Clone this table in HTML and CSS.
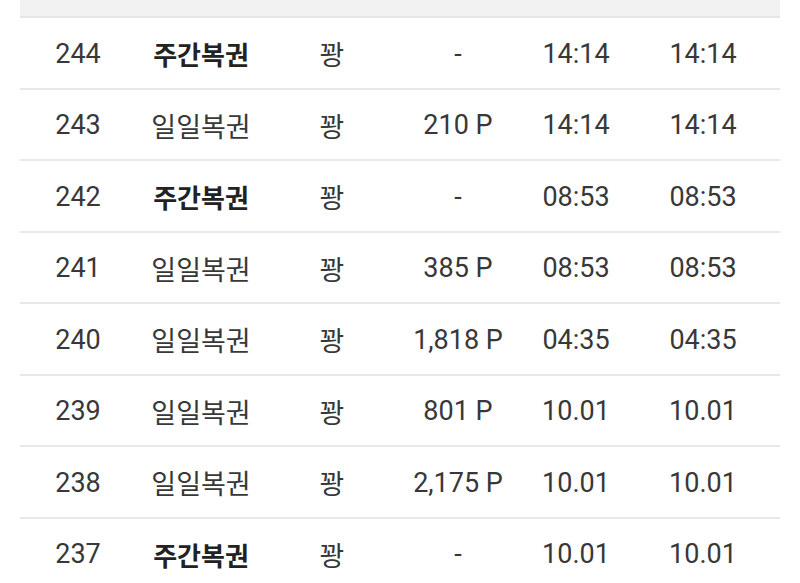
FILE: index.html
```html
<!DOCTYPE html>
<html lang="ko">
<head>
<meta charset="utf-8">
<link rel="stylesheet" href="styles.css">
</head>
<body>
<div class="board">
  <div class="head"></div>
  <div class="row"><span>244</span><span class="bold">주간복권</span><span>꽝</span><span>-</span><span>14:14</span><span>14:14</span></div>
  <div class="row"><span>243</span><span>일일복권</span><span>꽝</span><span>210 P</span><span>14:14</span><span>14:14</span></div>
  <div class="row"><span>242</span><span class="bold">주간복권</span><span>꽝</span><span>-</span><span>08:53</span><span>08:53</span></div>
  <div class="row"><span>241</span><span>일일복권</span><span>꽝</span><span>385 P</span><span>08:53</span><span>08:53</span></div>
  <div class="row"><span>240</span><span>일일복권</span><span>꽝</span><span>1,818 P</span><span>04:35</span><span>04:35</span></div>
  <div class="row"><span>239</span><span>일일복권</span><span>꽝</span><span>801 P</span><span>10.01</span><span>10.01</span></div>
  <div class="row"><span>238</span><span>일일복권</span><span>꽝</span><span>2,175 P</span><span>10.01</span><span>10.01</span></div>
  <div class="row"><span>237</span><span class="bold">주간복권</span><span>꽝</span><span>-</span><span>10.01</span><span>10.01</span></div>
</div>
</body>
</html>
```
FILE: styles.css
```css
html, body {
  margin: 0;
  padding: 0;
  background: #ffffff;
}
body {
  font-family: Roboto, "Noto Sans CJK KR", sans-serif;
  color: #383838;
  overflow: hidden;
}
.board {
  margin: 0 20px;
}
.head {
  height: 16px;
  background: #f2f2f2;
  border-bottom: 2px solid #e6e6e6;
}
.row {
  display: grid;
  grid-template-columns: 116px 130px 132px 120px 116px 138px;
  padding-right: 8px;
  padding-top: 2px;
  box-sizing: content-box;
  height: 67.5px;
  align-items: center;
  border-bottom: 2px solid #e8e8e8;
  font-size: 27px;
}
.row span {
  text-align: center;
  white-space: nowrap;
}
.row .bold {
  font-weight: 700;
  font-size: 26px;
  color: #222222;
}
```
